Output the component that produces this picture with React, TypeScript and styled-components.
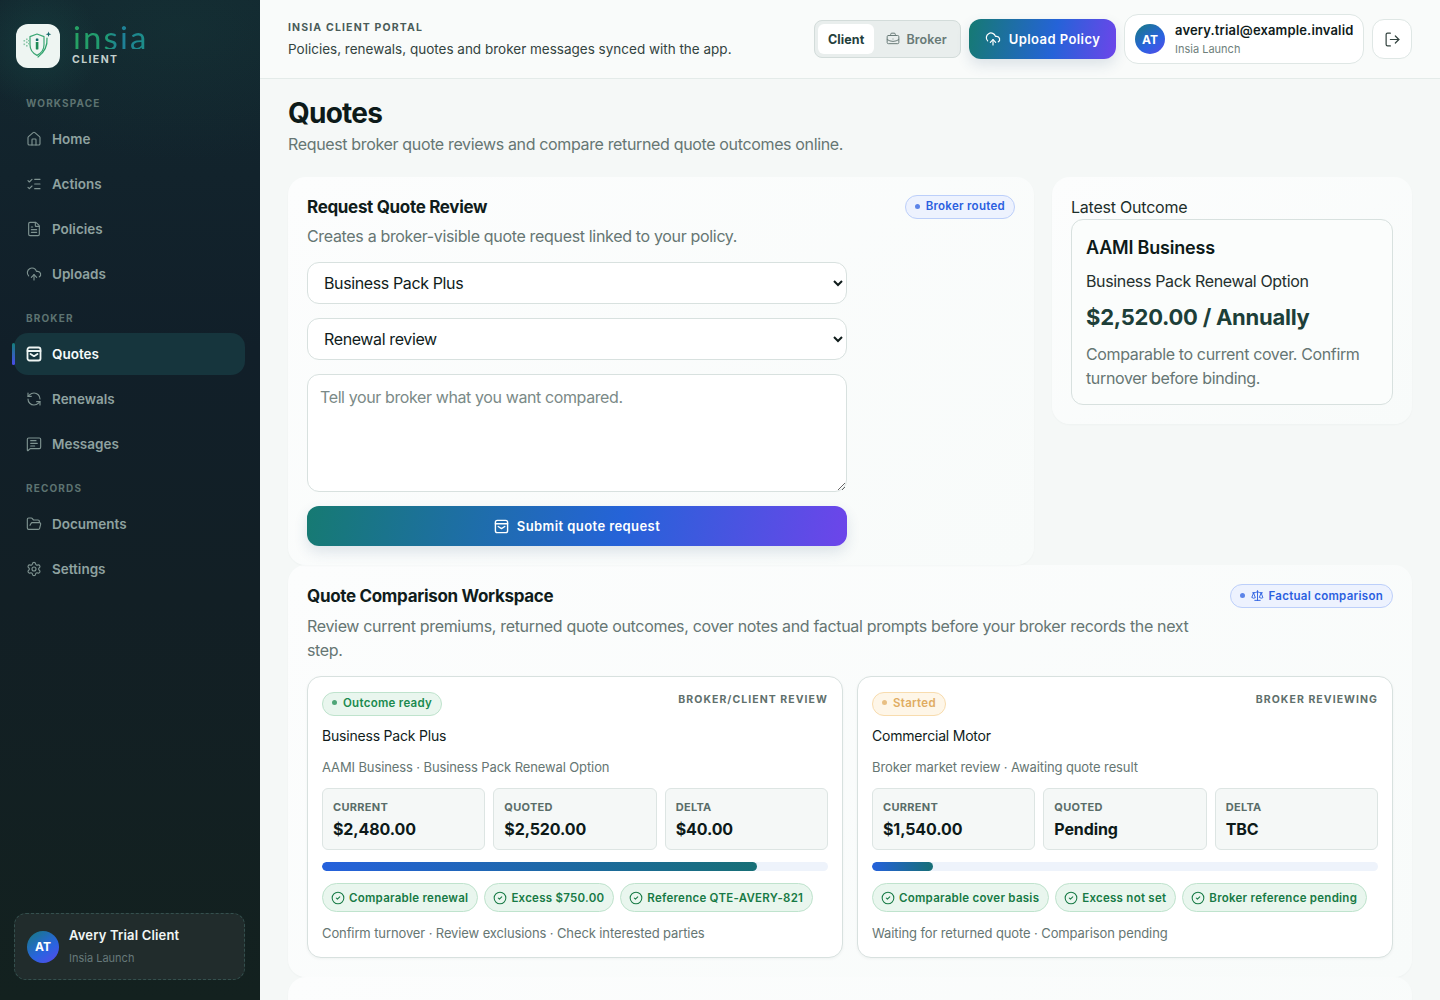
import React from "react";
import styled, { createGlobalStyle } from "styled-components";
import {
  House, ListChecks, FileText, CloudUpload, RefreshCcw, MessageSquareText,
  FolderOpen, Settings, BriefcaseBusiness, LogOut, CircleCheck, Scale,
} from "lucide-react";

const Global = createGlobalStyle`
  * { box-sizing: border-box; }
  html, body { margin: 0; height: 100%; overflow: hidden; }
  body { font-family: Inter, "Liberation Sans", sans-serif; background: #f5f8f7; color: #101c1b; }
`;

const Shell = styled.div`
  display: flex;
  height: 100vh;
  overflow: hidden;
`;

const Sidebar = styled.aside`
  width: 260px;
  flex: none;
  height: 100vh;
  display: flex;
  flex-direction: column;
  padding: 24px 15px 20px 14px;
  background:
    radial-gradient(circle at 38px 46px, rgba(26, 92, 84, 0.3), rgba(26, 92, 84, 0) 62px),
    radial-gradient(ellipse 240px 130px at 180px 30px, rgba(24, 80, 72, 0.18), rgba(24, 80, 72, 0) 100%),
    linear-gradient(180deg, #13272f 0%, #111f29 35%, #121f25 60%, #13211f 100%);
`;

const Brand = styled.div`
  display: flex;
  align-items: flex-start;
  gap: 12px;
  padding-left: 2px;
  height: 44px;
  margin-bottom: 29px;
`;

const LogoTile = styled.div`
  width: 44px;
  height: 44px;
  border-radius: 12px;
  background: #eef5f2;
  display: grid;
  place-items: center;
  flex: none;
`;

const BrandText = styled.div`
  display: flex;
  flex-direction: column;
  gap: 3.5px;
`;

const Wordmark = styled.span`
  font-family: Lato, Inter, sans-serif;
  font-weight: 400;
  font-size: 33px;
  line-height: 24px;
  height: 24px;
  letter-spacing: 2.1px;
  margin-left: 1px;
  margin-top: 1px;
  background: linear-gradient(90deg, #27a162 0%, #1f9a74 45%, #1f7f9a 62%, #1c8f86 100%);
  -webkit-background-clip: text;
  background-clip: text;
  color: transparent;
`;

const BrandSub = styled.span`
  font-size: 10.5px;
  line-height: 13px;
  font-weight: 700;
  letter-spacing: 1.4px;
  color: #c3cfcc;
`;

const SectionLabel = styled.div`
  font-size: 10px;
  line-height: 13px;
  font-weight: 700;
  letter-spacing: 1.15px;
  color: #5d7371;
  padding-left: 12px;
  margin-bottom: 8px;
`;

const NavList = styled.nav`
  display: flex;
  flex-direction: column;
  gap: 3px;
  margin-bottom: 17px;
`;

const NavItem = styled.a<{ $active?: boolean }>`
  position: relative;
  height: 42px;
  display: flex;
  align-items: center;
  gap: 10px;
  padding-left: 12px;
  border-radius: 14px;
  font-size: 13.5px;
  font-weight: 600;
  color: ${(p) => (p.$active ? "#f6fbfa" : "#8fa2a0")};
  background: ${(p) => (p.$active ? "#16353d" : "transparent")};
  svg { color: ${(p) => (p.$active ? "#eef5f3" : "#7f9391")}; flex: none; }
  ${(p) =>
    p.$active &&
    `&::before {
      content: "";
      position: absolute;
      left: -2px;
      top: 10px;
      width: 3px;
      height: 22px;
      border-radius: 2px;
      background: linear-gradient(180deg, #14807a, #4a4bea);
    }`}
`;

const Account = styled.div`
  margin-top: auto;
  height: 67px;
  display: flex;
  align-items: center;
  gap: 10px;
  padding: 0 12px;
  border-radius: 12px;
  background: #212c2c;
  border: 1px dashed #34504e;
`;

const Avatar = styled.div<{ $size: number }>`
  width: ${(p) => p.$size}px;
  height: ${(p) => p.$size}px;
  flex: none;
  border-radius: 50%;
  display: grid;
  place-items: center;
  color: #fff;
  font-size: 12px;
  font-weight: 700;
  background: linear-gradient(145deg, #167a80 0%, #2a63e0 60%, #5a48ea 100%);
`;

const AccountText = styled.div`
  margin-top: -2px;
`;

const AccountName = styled.div`
  font-size: 13px;
  line-height: 16px;
  font-weight: 600;
  letter-spacing: 0.17px;
  color: #f1f6f5;
`;

const AccountSub = styled.div`
  font-size: 11px;
  line-height: 14px;
  margin-top: 8px;
  color: #66797a;
`;

const Main = styled.main`
  flex: 1;
  min-width: 0;
  height: 100vh;
  overflow: hidden;
  background: #f5f8f7;
`;

const Header = styled.header`
  height: 79px;
  display: flex;
  align-items: center;
  justify-content: space-between;
  padding: 0 28px;
  background: #f9fbfa;
  border-bottom: 1px solid #e4ebe9;
`;

const Eyebrow = styled.div`
  font-size: 10.5px;
  line-height: 13px;
  font-weight: 700;
  letter-spacing: 1.15px;
  color: #4a5c59;
`;

const HeaderSub = styled.div`
  font-size: 13.5px;
  line-height: 16px;
  margin-top: 7px;
  color: #33433f;
`;

const HeaderActions = styled.div`
  display: flex;
  align-items: center;
  gap: 8px;
`;

const Segmented = styled.div`
  height: 38px;
  width: 147px;
  display: flex;
  align-items: center;
  padding: 3px;
  border-radius: 8px;
  border: 1px solid #d3dcda;
  background: #e9eeed;
`;

const Segment = styled.span<{ $active?: boolean }>`
  height: 30px;
  display: flex;
  align-items: center;
  gap: 6px;
  padding: 0 ${(p) => (p.$active ? "10px" : "8px 0 12px")};
  border-radius: 6px;
  font-size: 12.5px;
  font-weight: ${(p) => (p.$active ? 700 : 600)};
  letter-spacing: 0.1px;
  color: ${(p) => (p.$active ? "#24403c" : "#687a77")};
  background: ${(p) => (p.$active ? "#fff" : "transparent")};
`;

const GradientButton = styled.button<{ $wide?: boolean }>`
  height: 40px;
  width: ${(p) => (p.$wide ? "100%" : "147px")};
  flex: none;
  display: flex;
  align-items: center;
  justify-content: center;
  gap: 8px;
  border: 0;
  border-radius: 12px;
  color: #fff;
  font-family: inherit;
  font-size: 13px;
  font-weight: 600;
  letter-spacing: 0.42px;
  background: linear-gradient(100deg, #167a72 0%, #2563d8 58%, #6d45ea 100%);
  box-shadow: 0 6px 14px rgba(40, 80, 120, 0.14);
`;

const UserChip = styled.div`
  width: 240px;
  height: 50px;
  display: flex;
  align-items: center;
  gap: 10px;
  padding: 0 10px;
  border-radius: 14px;
  background: #fff;
  border: 1px solid #dfe7e5;
`;

const UserEmail = styled.div`
  font-size: 13px;
  line-height: 15px;
  font-weight: 600;
  letter-spacing: 0.15px;
  color: #101c1b;
  white-space: nowrap;
`;

const UserSub = styled.div`
  font-size: 11px;
  line-height: 14px;
  margin-top: 4px;
  color: #6f7f7c;
`;

const IconButton = styled.button`
  width: 40px;
  height: 40px;
  flex: none;
  display: grid;
  place-items: center;
  border-radius: 12px;
  border: 1px solid #dfe7e5;
  background: #fff;
  color: #33433f;
`;

const Page = styled.div`
  padding: 16px 28px 0;
`;

const PageTitle = styled.h1`
  margin: 0;
  font-size: 28px;
  line-height: 36px;
  font-weight: 700;
  letter-spacing: -0.75px;
  color: #0d1a19;
`;

const PageSub = styled.p`
  margin: 1px 0 21px;
  font-size: 16px;
  line-height: 24px;
  letter-spacing: -0.35px;
  color: #667673;
`;

const TopGrid = styled.div`
  display: grid;
  grid-template-columns: 746px 360px;
  gap: 18px;
  align-items: start;
`;

const Card = styled.section<{ $height?: number; $top?: number }>`
  padding: ${(p) => p.$top ?? 19}px 19px 19px;
  border-radius: 18px;
  background: linear-gradient(145deg, #fcfdfd 0%, #f8fbfa 100%);
  box-shadow: 0 1px 2px rgba(30, 60, 55, 0.03);
  ${(p) => (p.$height ? `height: ${p.$height}px;` : "")}
`;

const CardHead = styled.div`
  display: flex;
  justify-content: space-between;
  align-items: flex-start;
`;

const CardTitle = styled.h2`
  margin: 0;
  font-size: 17px;
  line-height: 24px;
  font-weight: 700;
  letter-spacing: -0.32px;
  color: #101c1b;
`;

const CardDesc = styled.p<{ $narrow?: boolean; $gap: number }>`
  margin: ${(p) => p.$gap}px 0 14px;
  font-size: 16px;
  line-height: 24px;
  letter-spacing: -0.33px;
  color: #667673;
  ${(p) => (p.$narrow ? "max-width: 900px;" : "")}
`;

const Pill = styled.span<{ $tone: "blue" | "green" | "amber"; $lift?: number }>`
  display: inline-flex;
  align-items: center;
  gap: 5px;
  height: 24px;
  padding: 0 9px ${(p) => p.$lift ?? 1}px;
  border-radius: 12px;
  font-size: 11.5px;
  font-weight: 600;
  letter-spacing: 0.28px;
  white-space: nowrap;
  color: ${(p) => ({ blue: "#2b5fe0", green: "#1a8a4f", amber: "#e0ac62" }[p.$tone])};
  background: ${(p) => ({ blue: "#edf2fe", green: "#e9f6ee", amber: "#fef6e8" }[p.$tone])};
  border: 1px solid ${(p) => ({ blue: "#bccffa", green: "#bfe3cd", amber: "#f8dcae" }[p.$tone])};
  &::before {
    content: "";
    width: 5px;
    height: 5px;
    border-radius: 50%;
    background: currentColor;
    opacity: 0.75;
    margin-right: 1px;
  }
`;

const FormStack = styled.form`
  width: 540px;
  display: flex;
  flex-direction: column;
  gap: 14px;
`;

const Select = styled.select`
  width: 100%;
  height: 42px;
  padding: 0 12px;
  border-radius: 12px;
  border: 1px solid #d8e1df;
  background: #fff;
  color: #101c1b;
  font-family: inherit;
  font-size: 16px;
  letter-spacing: -0.38px;
`;

const TextArea = styled.textarea`
  display: block;
  width: 100%;
  height: 118px;
  padding: 12px;
  border-radius: 12px;
  border: 1px solid #d8e1df;
  background: #fff;
  font-family: inherit;
  font-size: 16px;
  line-height: 20px;
  letter-spacing: -0.39px;
  &::placeholder { color: #7b8a87; }
`;

const PlainLabel = styled.div`
  font-size: 16px;
  line-height: 24px;
  letter-spacing: -0.22px;
  color: #1d2e2b;
`;

const OutcomeBox = styled.div`
  padding: 15px 14px 14px;
  height: 186px;
  border: 1px solid #d8e1df;
  border-radius: 12px;
  background: #fbfdfc;
`;

const OutcomeName = styled.div`
  font-size: 18px;
  line-height: 28px;
  font-weight: 600;
  letter-spacing: -0.2px;
  margin-top: -1px;
  color: #0d1a19;
`;

const OutcomeOption = styled.div`
  font-size: 16px;
  line-height: 24px;
  letter-spacing: -0.36px;
  margin-top: 7px;
  color: #24302e;
`;

const OutcomePrice = styled.div`
  font-size: 22px;
  line-height: 32px;
  font-weight: 700;
  letter-spacing: -0.25px;
  margin-top: 8px;
  color: #1d3f39;
`;

const OutcomeNote = styled.p`
  margin: 9px 0 0;
  font-size: 16px;
  line-height: 24px;
  letter-spacing: -0.36px;
  color: #667673;
`;

const CompareGrid = styled.div`
  display: grid;
  grid-template-columns: 1fr 1fr;
  gap: 14px;
`;

const QuoteCard = styled.article`
  height: 282px;
  padding: 15px 14px 0;
  border: 1px solid #d8e1df;
  border-radius: 14px;
  background: #fff;
  box-shadow: 0 1px 3px rgba(30, 60, 55, 0.05);
`;

const QuoteTop = styled.div`
  display: flex;
  justify-content: space-between;
  align-items: flex-start;
`;

const Kicker = styled.span`
  font-size: 10.5px;
  line-height: 13px;
  font-weight: 700;
  letter-spacing: 1.05px;
  margin-top: 1px;
  color: #5f706c;
`;

const QuoteName = styled.div`
  font-size: 14px;
  line-height: 18px;
  letter-spacing: -0.2px;
  margin-top: 11px;
  color: #101c1b;
`;

const QuoteMeta = styled.div<{ $gap: number }>`
  font-size: 13px;
  line-height: 16px;
  letter-spacing: -0.11px;
  margin-top: ${(p) => p.$gap}px;
  color: #667673;
`;

const Stats = styled.div`
  display: grid;
  grid-template-columns: repeat(3, 1fr);
  gap: 8px;
  margin-top: 13px;
`;

const Stat = styled.div`
  height: 62px;
  padding: 11px 10px 0;
  border: 1px solid #dde5e3;
  border-radius: 6px;
  background: #f5f8f7;
`;

const StatLabel = styled.div`
  font-size: 11px;
  line-height: 14px;
  font-weight: 700;
  letter-spacing: 0.3px;
  color: #5a6d69;
`;

const StatValue = styled.div`
  font-size: 16px;
  line-height: 24px;
  font-weight: 700;
  letter-spacing: -0.12px;
  margin-top: 3px;
  color: #0d1a19;
`;

const Track = styled.div`
  height: 9px;
  margin-top: 12px;
  border-radius: 5px;
  background: #eef3fb;
  overflow: hidden;
`;

const Fill = styled.div`
  height: 100%;
  border-radius: 5px;
  background: linear-gradient(90deg, #2561dc 0%, #176f76 100%);
`;

const ChipRow = styled.div`
  display: flex;
  gap: 6px;
  margin-top: 12px;
`;

const Chip = styled.span`
  height: 29px;
  display: inline-flex;
  align-items: center;
  gap: 4px;
  padding: 0 9px 0 8px;
  border-radius: 15px;
  font-size: 11.5px;
  font-weight: 600;
  letter-spacing: 0.26px;
  white-space: nowrap;
  color: #177a45;
  background: #e9f6ee;
  border: 1px solid #bfe3cd;
`;

const QuotesIcon = ({ size = 16, stroke = 1.8 }: { size?: number; stroke?: number }) => (
  <svg width={size} height={size} viewBox="0 0 16 16" fill="none" stroke="currentColor" strokeWidth={stroke} strokeLinecap="round" strokeLinejoin="round">
    <rect x="1.5" y="1.5" width="13" height="13" rx="2" />
    <path d="M1.5 5h13" />
    <path d="M4.5 8l3.5 2.2L11.5 8" />
  </svg>
);

const LogoMark = () => (
  <svg width="34" height="34" viewBox="0 0 34 34" fill="none">
    <path d="M16 5l7 2.6v8.2c0 5-3 8.6-7 10.6-4-2-7-5.6-7-10.6V7.6z" stroke="#3aa673" strokeWidth="1.2" strokeLinejoin="round" />
    <rect x="14.8" y="13" width="2.6" height="7.4" rx="0.4" fill="#1f8a56" />
    <rect x="14.8" y="9.6" width="2.6" height="2.3" rx="0.4" fill="#14696a" />
    <path d="M26 9c.6 7-2.4 14-9 19" stroke="#2fa36c" strokeWidth="1.2" strokeLinecap="round" />
    <path d="M27.5 2.5l.7 2.1 2.1.7-2.1.7-.7 2.1-.7-2.1-2.1-.7 2.1-.7z" fill="#14696a" />
    <g fill="#8cc6a8">
      <rect x="2.5" y="11" width="1.6" height="1.6" />
      <rect x="5" y="9.5" width="1.6" height="1.6" />
      <rect x="5" y="12.5" width="1.6" height="1.6" />
      <rect x="2.5" y="14.5" width="1.6" height="1.6" />
      <rect x="5" y="16" width="1.6" height="1.6" />
      <rect x="7" y="11" width="1.4" height="1.4" />
      <rect x="7" y="14" width="1.4" height="1.4" />
    </g>
  </svg>
);

const navIcon = { size: 16, strokeWidth: 1.7 };

const quotes = [
  {
    pill: "Outcome ready",
    tone: "green" as const,
    kicker: "BROKER/CLIENT REVIEW",
    name: "Business Pack Plus",
    meta: "AAMI Business · Business Pack Renewal Option",
    stats: [["CURRENT", "$2,480.00"], ["QUOTED", "$2,520.00"], ["DELTA", "$40.00"]],
    progress: 86,
    chips: ["Comparable renewal", "Excess $750.00", "Reference QTE-AVERY-821"],
    note: "Confirm turnover · Review exclusions · Check interested parties",
  },
  {
    pill: "Started",
    tone: "amber" as const,
    kicker: "BROKER REVIEWING",
    name: "Commercial Motor",
    meta: "Broker market review · Awaiting quote result",
    stats: [["CURRENT", "$1,540.00"], ["QUOTED", "Pending"], ["DELTA", "TBC"]],
    progress: 12,
    chips: ["Comparable cover basis", "Excess not set", "Broker reference pending"],
    note: "Waiting for returned quote · Comparison pending",
  },
];

export default function App() {
  return (
    <Shell>
      <Global />
      <Sidebar>
        <Brand>
          <LogoTile><LogoMark /></LogoTile>
          <BrandText>
            <Wordmark>insia</Wordmark>
            <BrandSub>CLIENT</BrandSub>
          </BrandText>
        </Brand>
        <SectionLabel>WORKSPACE</SectionLabel>
        <NavList>
          <NavItem><House {...navIcon} />Home</NavItem>
          <NavItem><ListChecks {...navIcon} />Actions</NavItem>
          <NavItem><FileText {...navIcon} />Policies</NavItem>
          <NavItem><CloudUpload {...navIcon} />Uploads</NavItem>
        </NavList>
        <SectionLabel>BROKER</SectionLabel>
        <NavList>
          <NavItem $active><QuotesIcon />Quotes</NavItem>
          <NavItem><RefreshCcw {...navIcon} />Renewals</NavItem>
          <NavItem><MessageSquareText {...navIcon} />Messages</NavItem>
        </NavList>
        <SectionLabel>RECORDS</SectionLabel>
        <NavList>
          <NavItem><FolderOpen {...navIcon} />Documents</NavItem>
          <NavItem><Settings {...navIcon} />Settings</NavItem>
        </NavList>
        <Account>
          <Avatar $size={32}>AT</Avatar>
          <AccountText>
            <AccountName>Avery Trial Client</AccountName>
            <AccountSub>Insia Launch</AccountSub>
          </AccountText>
        </Account>
      </Sidebar>
      <Main>
        <Header>
          <div>
            <Eyebrow>INSIA CLIENT PORTAL</Eyebrow>
            <HeaderSub>Policies, renewals, quotes and broker messages synced with the app.</HeaderSub>
          </div>
          <HeaderActions>
            <Segmented>
              <Segment $active>Client</Segment>
              <Segment><BriefcaseBusiness size={14} strokeWidth={1.7} />Broker</Segment>
            </Segmented>
            <GradientButton><CloudUpload size={16} strokeWidth={1.8} />Upload Policy</GradientButton>
            <UserChip>
              <Avatar $size={30}>AT</Avatar>
              <div>
                <UserEmail>avery.trial@example.invalid</UserEmail>
                <UserSub>Insia Launch</UserSub>
              </div>
            </UserChip>
            <IconButton aria-label="Log out"><LogOut size={17} strokeWidth={1.7} /></IconButton>
          </HeaderActions>
        </Header>
        <Page>
          <PageTitle>Quotes</PageTitle>
          <PageSub>Request broker quote reviews and compare returned quote outcomes online.</PageSub>
          <TopGrid>
            <Card $top={18}>
              <CardHead>
                <CardTitle>Request Quote Review</CardTitle>
                <Pill $tone="blue" $lift={2}>Broker routed</Pill>
              </CardHead>
              <CardDesc $gap={5}>Creates a broker-visible quote request linked to your policy.</CardDesc>
              <FormStack>
                <Select defaultValue="Business Pack Plus">
                  <option>Business Pack Plus</option>
                  <option>Commercial Motor</option>
                </Select>
                <Select defaultValue="Renewal review">
                  <option>Renewal review</option>
                  <option>New quote</option>
                </Select>
                <TextArea placeholder="Tell your broker what you want compared." />
                <GradientButton $wide type="button"><QuotesIcon size={15} stroke={1.5} />Submit quote request</GradientButton>
              </FormStack>
            </Card>
            <Card $top={18}>
              <PlainLabel>Latest Outcome</PlainLabel>
              <OutcomeBox>
                <OutcomeName>AAMI Business</OutcomeName>
                <OutcomeOption>Business Pack Renewal Option</OutcomeOption>
                <OutcomePrice>$2,520.00 / Annually</OutcomePrice>
                <OutcomeNote>Comparable to current cover. Confirm turnover before binding.</OutcomeNote>
              </OutcomeBox>
            </Card>
          </TopGrid>
          <Card>
            <CardHead>
              <CardTitle>Quote Comparison Workspace</CardTitle>
              <Pill $tone="blue"><Scale size={13} strokeWidth={1.7} />Factual comparison</Pill>
            </CardHead>
            <CardDesc $narrow $gap={6}>Review current premiums, returned quote outcomes, cover notes and factual prompts before your broker records the next step.</CardDesc>
            <CompareGrid>
              {quotes.map((q) => (
                <QuoteCard key={q.name}>
                  <QuoteTop>
                    <Pill $tone={q.tone} $lift={3}>{q.pill}</Pill>
                    <Kicker>{q.kicker}</Kicker>
                  </QuoteTop>
                  <QuoteName>{q.name}</QuoteName>
                  <QuoteMeta $gap={14}>{q.meta}</QuoteMeta>
                  <Stats>
                    {q.stats.map(([label, value]) => (
                      <Stat key={label}>
                        <StatLabel>{label}</StatLabel>
                        <StatValue>{value}</StatValue>
                      </Stat>
                    ))}
                  </Stats>
                  <Track><Fill style={{ width: `${q.progress}%` }} /></Track>
                  <ChipRow>
                    {q.chips.map((c) => (
                      <Chip key={c}><CircleCheck size={14} strokeWidth={1.8} />{c}</Chip>
                    ))}
                  </ChipRow>
                  <QuoteMeta $gap={13}>{q.note}</QuoteMeta>
                </QuoteCard>
              ))}
            </CompareGrid>
          </Card>
          <Card $height={200} />
        </Page>
      </Main>
    </Shell>
  );
}
